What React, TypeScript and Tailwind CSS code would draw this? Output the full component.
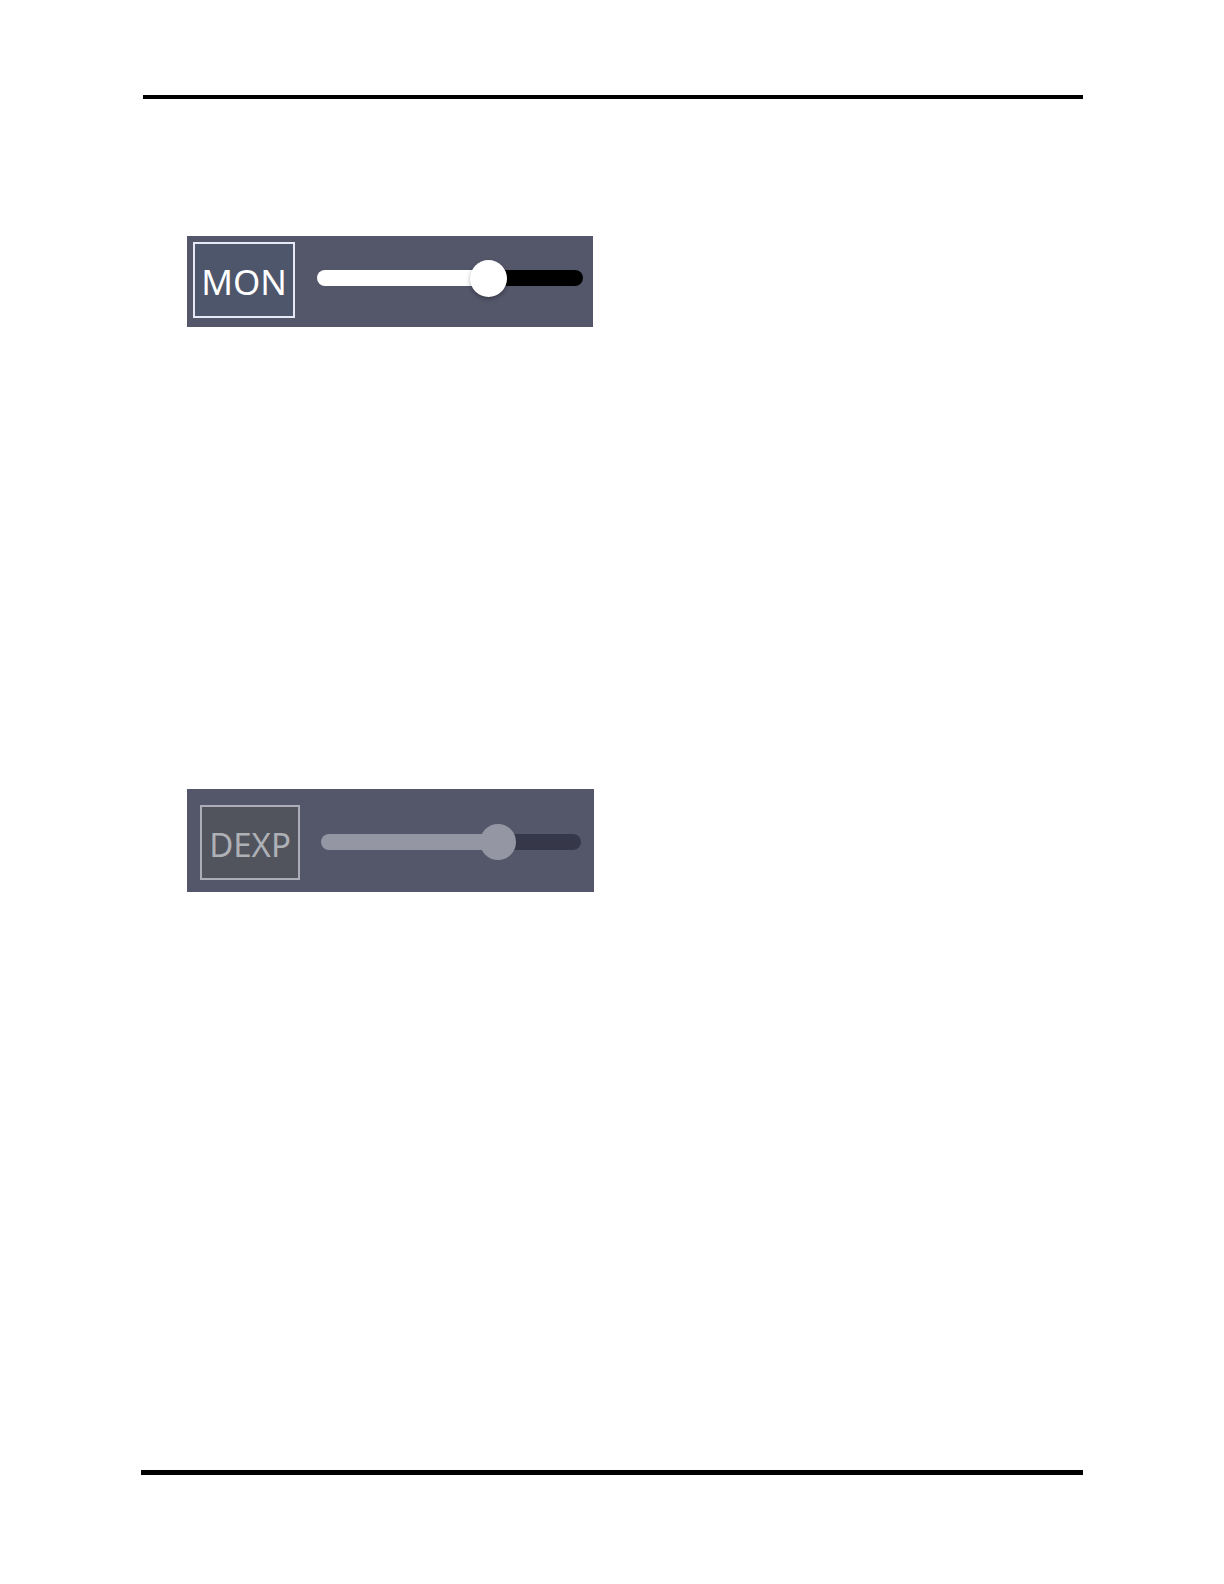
import { useState } from "react";
import type { CSSProperties } from "react";

const sliderBase =
  "h-[38px] min-w-0 flex-1 cursor-pointer appearance-none bg-transparent " +
  "[&::-webkit-slider-runnable-track]:h-4 [&::-webkit-slider-runnable-track]:rounded-full " +
  "[&::-webkit-slider-thumb]:appearance-none [&::-webkit-slider-thumb]:rounded-full";

const tones = {
  active: {
    button: "border-[#e6e8f6] bg-[#4e566b] text-white",
    slider:
      "[&::-webkit-slider-runnable-track]:bg-[linear-gradient(to_right,#ffffff_var(--fill),#000000_var(--fill))] [&::-webkit-slider-thumb]:-mt-[10px] [&::-webkit-slider-thumb]:size-[37px] [&::-webkit-slider-thumb]:bg-white [&::-webkit-slider-thumb]:shadow-[0_2px_4px_rgba(0,0,0,0.3)]",
  },
  dimmed: {
    button: "border-[#acadb9] bg-[#51535d] text-[#adb0b5]",
    slider:
      "[&::-webkit-slider-runnable-track]:bg-[linear-gradient(to_right,#9496a3_var(--fill),#36384a_var(--fill))] [&::-webkit-slider-thumb]:-mt-[10px] [&::-webkit-slider-thumb]:size-9 [&::-webkit-slider-thumb]:bg-[#9496a3]",
  },
};

type LevelProps = {
  label: string;
  initial: number;
  tone: keyof typeof tones;
  panelClass: string;
  buttonClass: string;
};

function LevelControl({ label, initial, tone, panelClass, buttonClass }: LevelProps) {
  const [value, setValue] = useState(initial);
  return (
    <section className={`flex w-full bg-[#54566a] ${panelClass}`}>
      <button type="button" className={`shrink-0 border-2 text-center ${buttonClass} ${tones[tone].button}`}>
        {label}
      </button>
      <input
        type="range"
        aria-label={`${label} level`}
        min={0}
        max={100}
        value={value}
        onChange={(e) => setValue(Number(e.target.value))}
        className={`${sliderBase} ${tones[tone].slider}`}
        style={{ "--fill": `${value}%` } as CSSProperties}
      />
    </section>
  );
}

export default function App() {
  return (
    <main className="min-h-screen bg-white pt-[95px] pr-[141px] pb-[109px] pl-[141px] font-['Noto_Sans',sans-serif]">
      <hr className="ml-0.5 h-1 border-0 bg-black" />
      <div className="ml-[46px] flex max-w-[407px] flex-col gap-[462px] pt-[137px] pb-[578px]">
        <LevelControl
          label="MON"
          initial={67}
          tone="active"
          panelClass="max-w-[406px] gap-[22px] pt-1.5 pr-[10px] pb-[9px] pl-1.5 [&>input]:mt-[17px]"
          buttonClass="h-[76px] w-[102px] text-[35px] leading-[76px]"
        />
        <LevelControl
          label="DEXP"
          initial={71}
          tone="dimmed"
          panelClass="gap-[21px] pt-4 pr-[13px] pb-3 pl-[13px] [&>input]:mt-[18px]"
          buttonClass="h-[75px] w-[100px] text-[33px] leading-[75px]"
        />
      </div>
      <hr className="h-[5px] border-0 bg-black" />
    </main>
  );
}
